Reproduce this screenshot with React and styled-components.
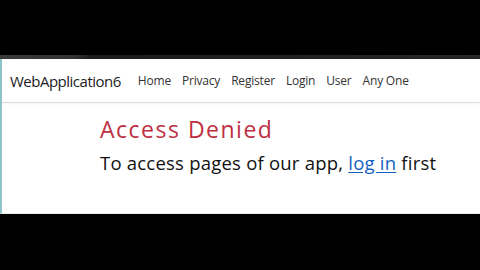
import styled, { createGlobalStyle } from 'styled-components';

const GlobalStyle = createGlobalStyle`
  html, body {
    margin: 0;
    padding: 0;
    background: #000;
  }
  body {
    font-family: 'Open Sans', 'Noto Sans', sans-serif;
  }
`;

const links = ['Home', 'Privacy', 'Register', 'Login', 'User', 'Any One'];

export default function App() {
  return (
    <>
      <GlobalStyle />
      <Frame>
        <TopBand />
        <Strip />
        <Window>
          <NavBar>
            <Brand>WebApplication6</Brand>
            <NavList>
              {links.map((l) => (
                <NavLink key={l}>{l}</NavLink>
              ))}
            </NavList>
          </NavBar>
          <Main>
            <Title>Access Denied</Title>
            <Message>
              To access pages of our app, <LoginLink href="#">log in</LoginLink> first
            </Message>
          </Main>
        </Window>
        <BottomBand />
      </Frame>
    </>
  );
}

const Frame = styled.div`
  width: 480px;
  height: 270px;
  display: flex;
  flex-direction: column;
  background: #000;
  overflow: hidden;
`;
const TopBand = styled.div`
  height: 55px;
  background: #000;
`;
const Strip = styled.div`
  height: 4px;
  background: linear-gradient(to right, #3a3a3a 0, #333 75px, #1c1c1c 90px, #262626 100%);
`;
const Window = styled.div`
  height: 154px;
  background: #fff;
  border-left: 2px solid #8fc4cc;
  border-bottom: 1px solid #ececec;
  display: flex;
  flex-direction: column;
`;
const NavBar = styled.nav`
  height: 44px;
  box-sizing: border-box;
  border-bottom: 1px solid #dcdcdc;
  display: flex;
  align-items: center;
  padding: 0 0 0 8px;
  box-shadow: 0 1px 3px rgba(0, 0, 0, 0.04);
`;
const Brand = styled.div`
  font-size: 15px;
  color: #222;
  margin-right: 17px;
  letter-spacing: -0.5px;
`;
const NavList = styled.div`
  display: flex;
  gap: 11px;
`;
const NavLink = styled.span`
  font-size: 12px;
  color: #333;
  letter-spacing: -0.2px;
`;
const Main = styled.main`
  padding: 11px 0 0 98px;
`;
const Title = styled.h1`
  margin: 0;
  font-size: 23px;
  font-weight: 400;
  color: #bd3042;
  line-height: 30px;
  letter-spacing: 1.5px;
`;
const Message = styled.p`
  margin: 7px 0 0;
  font-size: 18.5px;
  color: #111;
  line-height: 24px;
  letter-spacing: 0.22px;
`;
const LoginLink = styled.a`
  color: #145fc2;
  text-decoration: underline;
  text-underline-offset: 2px;
`;
const BottomBand = styled.div`
  flex: 1;
  background: #000;
`;
